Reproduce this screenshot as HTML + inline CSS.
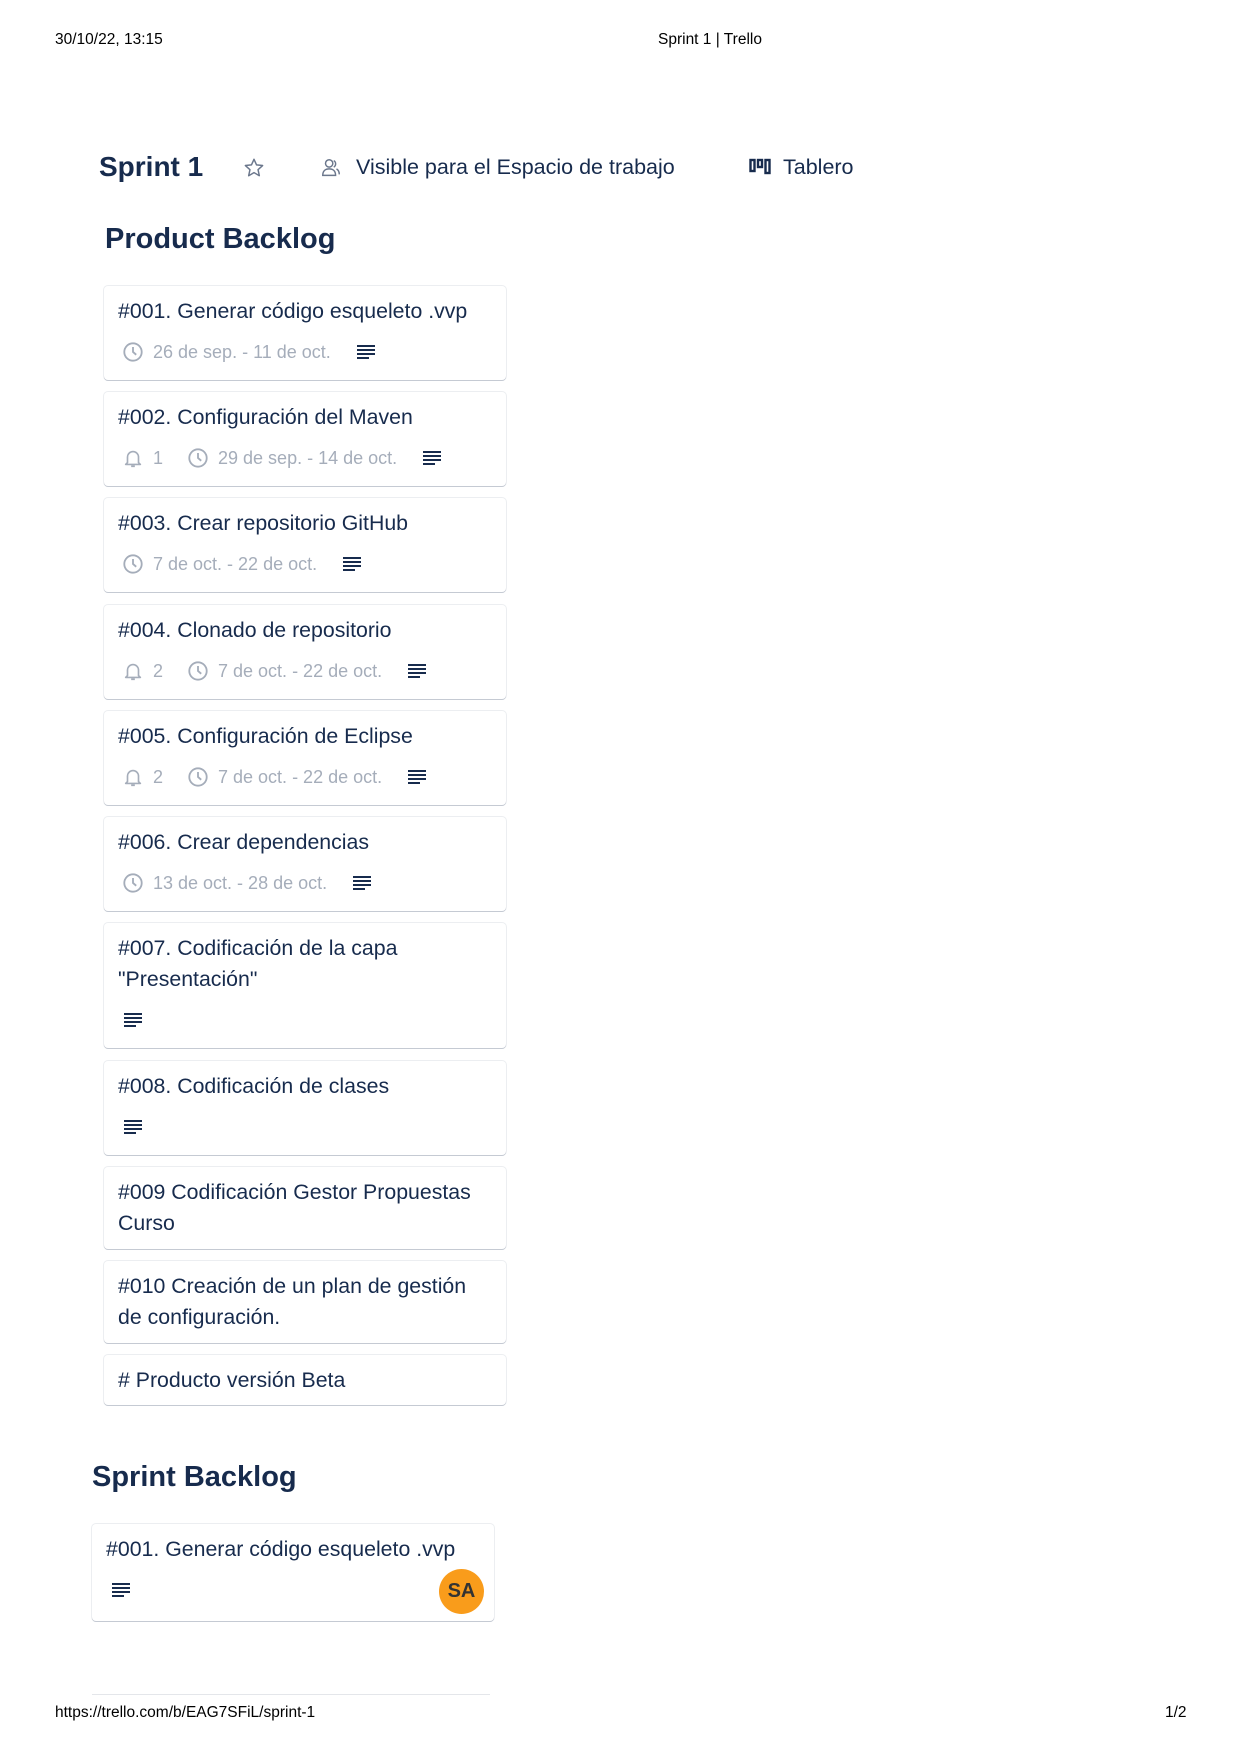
<!DOCTYPE html>
<html><head><meta charset="utf-8"><style>
*{margin:0;padding:0;box-sizing:border-box}
body{width:1240px;height:1754px;background:#fff;position:relative;font-family:"Liberation Sans",sans-serif;color:#172b4d;overflow:hidden}
.hdr{position:absolute;font-size:15.5px;color:#000}
.card{position:absolute;left:104px;width:402px;background:#fff;border-radius:4px;box-shadow:0 1px 0 #c5cad3,0 0 0 1px #eceef1;padding:10px 13px 0 14px}
.t{font-size:21.3px;line-height:31px;color:#172b4d}
.m{display:flex;align-items:center;height:28px;margin-top:11px;font-size:18px;color:#a5adba}
.m svg{flex:none}
.ic{margin-left:4px;margin-right:9px}
.sp{margin-right:25px}
.h{position:absolute;font-weight:bold;color:#172b4d}
</style></head><body>
<div class="hdr" style="left:55px;top:31px">30/10/22, 13:15</div>
<div class="hdr" style="left:658px;top:31px">Sprint 1 | Trello</div>

<div class="h" style="left:99px;top:151px;font-size:28px">Sprint 1</div>
<svg style="position:absolute;left:243px;top:157px" width="22" height="22" viewBox="0 0 24 24"><path d="M12 2.5l2.8 6.1 6.6.7-5 4.5 1.4 6.6L12 17l-5.8 3.4 1.4-6.6-5-4.5 6.6-.7z" fill="none" stroke="#6b778c" stroke-width="1.6" stroke-linejoin="round"/></svg>
<svg style="position:absolute;left:320px;top:157px" width="22" height="22" viewBox="0 0 24 24" fill="none" stroke="#6b778c" stroke-width="1.6"><circle cx="10" cy="7" r="4"/><path d="M3 20c0-5 3-7 7-7s7 2 7 7z"/><path d="M15 4a4 4 0 0 1 0 7M18 13c2 1 3 3 3 6"/></svg>
<div style="position:absolute;left:356px;top:155px;font-size:21.5px;color:#172b4d">Visible para el Espacio de trabajo</div>
<svg style="position:absolute;left:749px;top:158px" width="22" height="18" viewBox="0 0 22 18" fill="none" stroke="#172b4d" stroke-width="2.4"><rect x="1.5" y="2" width="4" height="11"/><rect x="9" y="2" width="4" height="7"/><rect x="16.5" y="2" width="4" height="13"/></svg>
<div style="position:absolute;left:783px;top:155px;font-size:21.5px;color:#172b4d">Tablero</div>

<div class="h" style="left:105px;top:223px;font-size:29px;font-weight:bold">Product Backlog</div>

<svg width="0" height="0" style="position:absolute"><defs>
<symbol id="clk" viewBox="0 0 24 24"><circle cx="12" cy="12" r="9.5" fill="none" stroke="#a5adba" stroke-width="2"/><path d="M12 6.5V12l3.5 3" fill="none" stroke="#a5adba" stroke-width="2"/></symbol>
<symbol id="bel" viewBox="0 0 24 24"><path d="M6 17V11a6 6 0 0 1 12 0v6l2 2H4z M10 21h4" fill="none" stroke="#a5adba" stroke-width="1.8" stroke-linejoin="round"/></symbol>
<symbol id="dsc" viewBox="0 0 20 16"><path d="M1 2h18M1 6h18M1 10h18M1 14h12" stroke="#172b4d" stroke-width="2"/></symbol>
</defs></svg>

<div class="card" style="top:286px;height:94px"><div class="t">#001. Generar código esqueleto .vvp</div>
<div class="m"><svg class="ic" width="22" height="22"><use href="#clk"/></svg><span class="sp">26 de sep. - 11 de oct.</span><svg width="20" height="16"><use href="#dsc"/></svg></div></div>

<div class="card" style="top:392px;height:94px"><div class="t">#002. Configuración del Maven</div>
<div class="m"><svg class="ic" width="22" height="22"><use href="#bel"/></svg><span style="margin-right:20px">1</span><svg class="ic" width="22" height="22"><use href="#clk"/></svg><span class="sp">29 de sep. - 14 de oct.</span><svg width="20" height="16"><use href="#dsc"/></svg></div></div>

<div class="card" style="top:498px;height:94px"><div class="t">#003. Crear repositorio GitHub</div>
<div class="m"><svg class="ic" width="22" height="22"><use href="#clk"/></svg><span class="sp">7 de oct. - 22 de oct.</span><svg width="20" height="16"><use href="#dsc"/></svg></div></div>

<div class="card" style="top:605px;height:94px"><div class="t">#004. Clonado de repositorio</div>
<div class="m"><svg class="ic" width="22" height="22"><use href="#bel"/></svg><span style="margin-right:20px">2</span><svg class="ic" width="22" height="22"><use href="#clk"/></svg><span class="sp">7 de oct. - 22 de oct.</span><svg width="20" height="16"><use href="#dsc"/></svg></div></div>

<div class="card" style="top:711px;height:94px"><div class="t">#005. Configuración de Eclipse</div>
<div class="m"><svg class="ic" width="22" height="22"><use href="#bel"/></svg><span style="margin-right:20px">2</span><svg class="ic" width="22" height="22"><use href="#clk"/></svg><span class="sp">7 de oct. - 22 de oct.</span><svg width="20" height="16"><use href="#dsc"/></svg></div></div>

<div class="card" style="top:817px;height:94px"><div class="t">#006. Crear dependencias</div>
<div class="m"><svg class="ic" width="22" height="22"><use href="#clk"/></svg><span class="sp">13 de oct. - 28 de oct.</span><svg width="20" height="16"><use href="#dsc"/></svg></div></div>

<div class="card" style="top:923px;height:125px"><div class="t">#007. Codificación de la capa<br>"Presentación"</div>
<div class="m"><svg style="margin-left:5px" width="20" height="16"><use href="#dsc"/></svg></div></div>

<div class="card" style="top:1061px;height:94px"><div class="t">#008. Codificación de clases</div>
<div class="m"><svg style="margin-left:5px" width="20" height="16"><use href="#dsc"/></svg></div></div>

<div class="card" style="top:1167px;height:82px"><div class="t">#009 Codificación Gestor Propuestas<br>Curso</div></div>

<div class="card" style="top:1261px;height:82px"><div class="t">#010 Creación de un plan de gestión<br>de configuración.</div></div>

<div class="card" style="top:1355px;height:50px"><div class="t">#&nbsp;Producto versión Beta</div></div>

<div class="h" style="left:92px;top:1461px;font-size:29px">Sprint Backlog</div>

<div class="card" style="left:92px;top:1524px;height:97px"><div class="t">#001. Generar código esqueleto .vvp</div>
<div class="m"><svg style="margin-left:5px" width="20" height="16"><use href="#dsc"/></svg></div>
<div style="position:absolute;left:347px;top:45px;width:45px;height:45px;border-radius:50%;background:#f99c1b;color:#333;font-weight:bold;font-size:20px;line-height:45px;text-align:center">SA</div></div>

<div style="position:absolute;left:92px;top:1694px;width:398px;height:1px;background:#e4e6ea"></div>
<div class="hdr" style="left:55px;top:1704px">https://trello.com/b/EAG7SFiL/sprint-1</div>
<div class="hdr" style="left:1165px;top:1704px">1/2</div>
</body></html>
